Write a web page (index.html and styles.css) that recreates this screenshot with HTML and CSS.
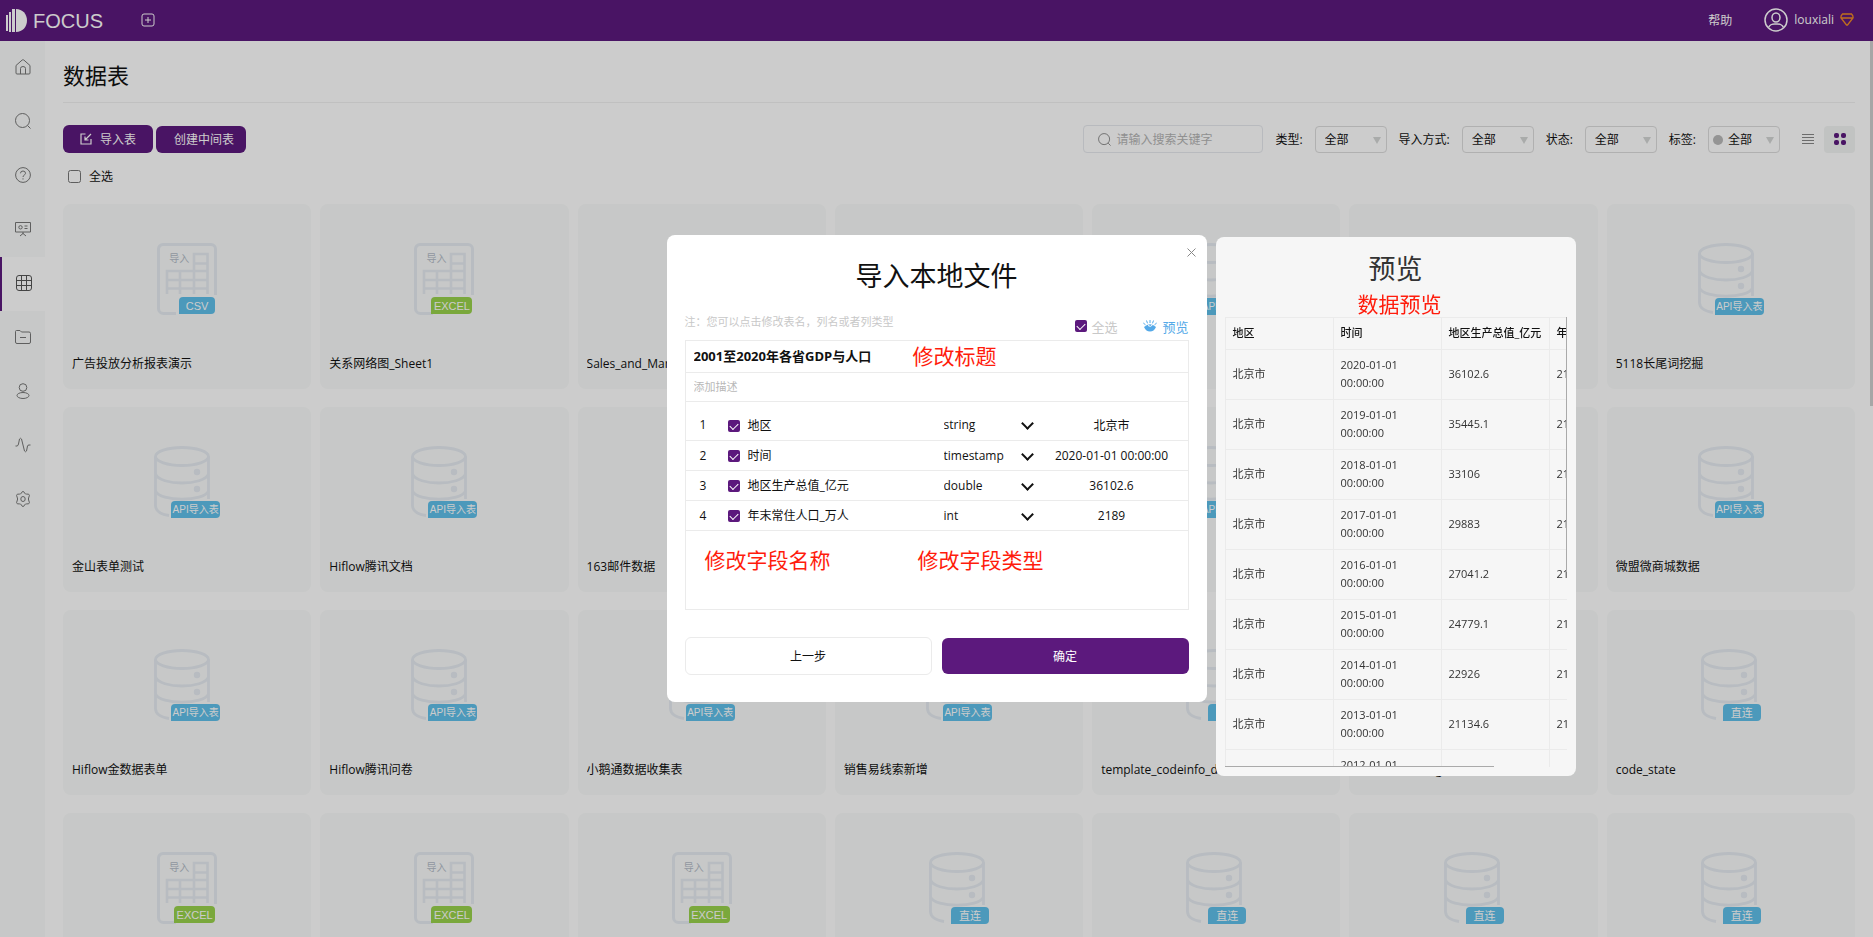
FILE: index.html
```html
<!DOCTYPE html>
<html lang="zh-CN">
<head>
<meta charset="utf-8">
<title>数据表</title>
<link rel="stylesheet" href="styles.css">
</head>
<body>
<svg class="defs" aria-hidden="true">
  <symbol id="file" viewBox="0 0 60 72">
    <path d="M58.5 52V6A4.5 4.5 0 0 0 54 1.5H6A4.5 4.5 0 0 0 1.500 6V65.500A5 5 0 0 0 6.500 70.500H19" fill="none" stroke="#e6ebf2" stroke-width="3"/>
    <path d="M10 51V28H50.500M23 28V51M37 51V11H50.500V51M37 20.500H50.500M10 37H50.500M10 45.500H50.500" fill="none" stroke="#e6ebf2" stroke-width="2.600"/>
  </symbol>
  <symbol id="db" viewBox="0 0 56 72">
    <g fill="none" stroke="#e6ebf2" stroke-width="2.800">
      <ellipse cx="28" cy="10.500" rx="26.500" ry="9"/>
      <path d="M1.500 10.500V60C2 66 8 68.500 15 69.500M54.500 10.500V53M1.500 28C6 40 50 40 54.500 28M1.500 45C6 56 50 56 54.500 45"/>
    </g>
    <circle cx="43" cy="26" r="3.200" fill="#e6ebf2"/><circle cx="43" cy="43" r="3.200" fill="#e6ebf2"/>
  </symbol>
</svg>

<div class="app">
  <header class="topbar">
    <a class="logo" href="#">
      <svg width="21" height="24" viewBox="0 0 21 24" fill="#fff"><rect x="0" y="6" width="2" height="16"/><rect x="3" y="3" width="2" height="20"/><rect x="6" y="0" width="3" height="23"/><path d="M10 0V23C16.500 23 21 18 21 11.500S16.500 0 10 0z"/></svg>
      <span>FOCUS</span>
    </a>
    <button class="icon-btn new-tab" aria-label="新建"><svg width="14" height="14" viewBox="0 0 14 14" fill="none" stroke="#fff"><rect x="1" y="1" width="12" height="12" rx="2"/><path d="M7 4V10M4 7H10"/></svg></button>
    <div class="account">
      <a href="#">帮助</a>
      <a class="user" href="#">
        <svg width="24" height="24" viewBox="0 0 24 24" fill="none" stroke="#fff" stroke-width="1.500"><circle cx="12" cy="12" r="11"/><ellipse cx="12" cy="9.500" rx="4" ry="4.500"/><path d="M4.500 19.500C6.500 15.500 9 16 12 16S17.500 15.500 19.500 19.500"/></svg>
        <span>louxiali</span>
        <svg width="14" height="13" viewBox="0 0 14 13" fill="none" stroke="#f08a24" stroke-width="1.300"><path d="M2.500 1H11.500Q13.500 3 13 5L7.500 12H6.500L1 5Q.5 3 2.500 1zM1 5H13"/></svg>
      </a>
    </div>
  </header>

  <div class="body">
    <nav class="side">
      <a href="#" aria-label="首页"><svg viewBox="0 0 16 16"><path d="M1 6.500L7.200 1Q8 .5 8.800 1L15 6.500V14Q15 15 14 15H2Q1 15 1 14zM5.500 15V9.500Q5.500 7.500 8 7.500T10.500 9.500V15"/></svg></a>
      <a href="#" aria-label="搜索"><svg viewBox="0 0 16 16"><circle cx="7.500" cy="7.500" r="7"/><path d="M12.500 12.500L15.500 15.500"/></svg></a>
      <a href="#" aria-label="帮助"><svg viewBox="0 0 16 16"><circle cx="8" cy="8" r="7.400"/><path d="M5.500 6.300Q5.500 4 8 4T10.500 6.300C10.500 8 8 8 8 10M8 11.300V12.500"/></svg></a>
      <a href="#" aria-label="看板"><svg viewBox="0 0 16 16"><path d="M.5 1.500H15.500V11H.5zM8 11V13M5 15L8 12.500L11 15M9.500 5H12.500M9.500 7.500H12.500"/><circle cx="5.500" cy="6.300" r="1.700"/></svg></a>
      <a href="#" class="current" aria-label="数据表"><svg viewBox="0 0 16 16"><rect x=".5" y=".5" width="15" height="15" rx="2.500"/><path d="M5.500 .5V15.500M10.500 .5V15.500M.5 5.500H15.500M.5 10.500H15.500"/></svg></a>
      <a href="#" aria-label="资源"><svg viewBox="0 0 16 16"><path d="M.5 2.500Q.5 1.500 1.500 1.500H5L6.500 3H14Q15.500 3 15.500 4.500V13Q15.500 14.500 14 14.500H2Q.5 14.500 .5 13zM5 8.500H11"/></svg></a>
      <a href="#" aria-label="用户"><svg viewBox="0 0 16 16"><circle cx="8" cy="4.500" r="3.800"/><ellipse cx="8" cy="12.500" rx="6" ry="3"/></svg></a>
      <a href="#" aria-label="监控"><svg viewBox="0 0 16 16"><path d="M.5 9H2Q3 9 3.500 7L4.500 2Q5.500 .5 6.500 2L9.500 14Q10.500 15.500 11.500 14L12.500 9Q12.700 8 14 8H15.500"/></svg></a>
      <a href="#" aria-label="设置"><svg viewBox="0 0 16 16"><path d="M6.300 2.200Q8 -1.400 9.700 2.200Q10.300 3.300 11.600 3.100Q15.600 2.800 13.900 6Q12.900 8 13.900 10Q15.600 13.200 11.600 12.900Q10.300 12.700 9.700 13.800Q8 17.400 6.300 13.800Q5.700 12.700 4.400 12.900Q.4 13.200 2.100 10Q3.100 8 2.100 6Q.4 2.800 4.400 3.100Q5.700 3.300 6.300 2.200z"/><ellipse cx="8" cy="8" rx="2.200" ry="2.500"/></svg></a>
    </nav>

    <main class="main">
      <h1 class="page-title">数据表</h1>
      <div class="toolbar">
        <button class="btn"><svg width="12" height="12" viewBox="0 0 12 12" fill="none" stroke="#fff" stroke-width="1.200"><path d="M5.500 1H1V11H11V6M11 1L5 7M5 3.500V7H8.500"/></svg>导入表</button>
        <button class="btn plain">创建中间表</button>
        <div class="filters">
          <label class="search"><svg width="13" height="13" viewBox="0 0 16 16" fill="none" stroke="#777"><circle cx="7.500" cy="7.500" r="6.800"/><path d="M12.500 12.500L15.500 15.500"/></svg><input type="text" placeholder="请输入搜索关键字" aria-label="搜索"></label>
          <label for="f1">类型:</label><span class="pick"><select id="f1"><option>全部</option></select></span>
          <label for="f2">导入方式:</label><span class="pick"><select id="f2"><option>全部</option></select></span>
          <label for="f3">状态:</label><span class="pick"><select id="f3"><option>全部</option></select></span>
          <label for="f4">标签:</label><span class="pick tag"><select id="f4"><option>全部</option></select></span>
          <div class="views">
            <button class="icon-btn" aria-label="列表"><svg width="12" height="12" viewBox="0 0 12 12" stroke="#888"><path d="M0 1.500H12M0 4.500H12M0 7.500H12M0 10.500H12"/></svg></button>
            <button class="icon-btn on" aria-label="网格"><svg width="12" height="12" viewBox="0 0 12 12" fill="#5c197d"><rect width="5" height="5" rx="2"/><rect x="7" width="5" height="5" rx="2"/><rect y="7" width="5" height="5" rx="2"/><rect x="7" y="7" width="5" height="5" rx="2"/></svg></button>
          </div>
        </div>
      </div>
      <label class="select-all"><input type="checkbox">全选</label>

      <div class="cards">
        <article class="card"><div class="pic file"><svg><use href="#file"/></svg><b>导入</b><i>CSV</i></div><p>广告投放分析报表演示</p></article>
        <article class="card"><div class="pic file excel"><svg><use href="#file"/></svg><b>导入</b><i>EXCEL</i></div><p>关系网络图_Sheet1</p></article>
        <article class="card"><div class="pic api"><svg><use href="#db"/></svg><i>API导入表</i></div><p>Sales_and_Marketing</p></article>
        <article class="card"><div class="pic api"><svg><use href="#db"/></svg><i>API导入表</i></div></article>
        <article class="card"><div class="pic api"><svg><use href="#db"/></svg><i>API导入表</i></div></article>
        <article class="card"><div class="pic api"><svg><use href="#db"/></svg><i>API导入表</i></div></article>
        <article class="card"><div class="pic api"><svg><use href="#db"/></svg><i>API导入表</i></div><p>5118长尾词挖掘</p></article>

        <article class="card"><div class="pic api"><svg><use href="#db"/></svg><i>API导入表</i></div><p>金山表单测试</p></article>
        <article class="card"><div class="pic api"><svg><use href="#db"/></svg><i>API导入表</i></div><p>Hiflow腾讯文档</p></article>
        <article class="card"><div class="pic api"><svg><use href="#db"/></svg><i>API导入表</i></div><p>163邮件数据</p></article>
        <article class="card"><div class="pic api"><svg><use href="#db"/></svg><i>API导入表</i></div></article>
        <article class="card"><div class="pic api"><svg><use href="#db"/></svg><i>API导入表</i></div></article>
        <article class="card"><div class="pic api"><svg><use href="#db"/></svg><i>API导入表</i></div></article>
        <article class="card"><div class="pic api"><svg><use href="#db"/></svg><i>API导入表</i></div><p>微盟微商城数据</p></article>

        <article class="card"><div class="pic api"><svg><use href="#db"/></svg><i>API导入表</i></div><p>Hiflow金数据表单</p></article>
        <article class="card"><div class="pic api"><svg><use href="#db"/></svg><i>API导入表</i></div><p>Hiflow腾讯问卷</p></article>
        <article class="card"><div class="pic api"><svg><use href="#db"/></svg><i>API导入表</i></div><p>小鹅通数据收集表</p></article>
        <article class="card"><div class="pic api"><svg><use href="#db"/></svg><i>API导入表</i></div><p>销售易线索新增</p></article>
        <article class="card"><div class="pic direct"><svg><use href="#db"/></svg><i>直连</i></div><p>template_codeinfo_d</p></article>
        <article class="card"><div class="pic direct"><svg><use href="#db"/></svg><i>直连</i></div><p>code_sales_region</p></article>
        <article class="card"><div class="pic direct"><svg><use href="#db"/></svg><i>直连</i></div><p>code_state</p></article>

        <article class="card"><div class="pic file excel"><svg><use href="#file"/></svg><b>导入</b><i>EXCEL</i></div></article>
        <article class="card"><div class="pic file excel"><svg><use href="#file"/></svg><b>导入</b><i>EXCEL</i></div></article>
        <article class="card"><div class="pic file excel"><svg><use href="#file"/></svg><b>导入</b><i>EXCEL</i></div></article>
        <article class="card"><div class="pic direct"><svg><use href="#db"/></svg><i>直连</i></div></article>
        <article class="card"><div class="pic direct"><svg><use href="#db"/></svg><i>直连</i></div></article>
        <article class="card"><div class="pic direct"><svg><use href="#db"/></svg><i>直连</i></div></article>
        <article class="card"><div class="pic direct"><svg><use href="#db"/></svg><i>直连</i></div></article>
      </div>
      <div class="page-scroll"></div>
    </main>
  </div>
</div>

<div class="overlay">
  <div class="stage">
    <section class="modal" role="dialog" aria-labelledby="dlg">
      <button class="icon-btn close" aria-label="关闭"><svg width="9" height="9" viewBox="0 0 9 9" stroke="#888"><path d="M.5 .5L8.500 8.500M8.500 .5L.5 8.500"/></svg></button>
      <h2 class="dlg-title" id="dlg">导入本地文件</h2>
      <div class="hint">
        <span class="note">注：您可以点击修改表名，列名或者列类型</span>
        <label class="all"><input class="check" type="checkbox" checked>全选</label>
        <button class="preview-link"><svg width="14" height="12" viewBox="0 0 14 12" fill="#54a9e8"><path d="M1 7Q7 1.500 13 7Q11 11.500 7 11.500T1 7z"/><path d="M7 0V3M3.500 .5L4.500 3.300M10.500 .5L9.500 3.300M.3 3L2.500 4.800M13.700 3L11.500 4.800" stroke="#54a9e8"/><path d="M5 5.500Q7.500 7.500 9.500 5" stroke="#fff" fill="none"/></svg>预览</button>
      </div>
      <div class="sheet">
        <input class="sheet-name" type="text" value="2001至2020年各省GDP与人口" aria-label="表名">
        <input class="sheet-desc" type="text" placeholder="添加描述" aria-label="描述">
        <table class="fields">
          <tr><td class="no">1</td><td class="tick"><input class="check" type="checkbox" checked aria-label="地区"></td><td>地区</td><td class="type"><select aria-label="类型"><option>string</option></select></td><td class="val">北京市</td></tr>
          <tr><td class="no">2</td><td class="tick"><input class="check" type="checkbox" checked aria-label="时间"></td><td>时间</td><td class="type"><select aria-label="类型"><option>timestamp</option></select></td><td class="val">2020-01-01 00:00:00</td></tr>
          <tr><td class="no">3</td><td class="tick"><input class="check" type="checkbox" checked aria-label="地区生产总值"></td><td>地区生产总值_亿元</td><td class="type"><select aria-label="类型"><option>double</option></select></td><td class="val">36102.6</td></tr>
          <tr><td class="no">4</td><td class="tick"><input class="check" type="checkbox" checked aria-label="年末常住人口"></td><td>年末常住人口_万人</td><td class="type"><select aria-label="类型"><option>int</option></select></td><td class="val">2189</td></tr>
        </table>
      </div>
      <div class="actions"><button class="back">上一步</button><button class="ok">确定</button></div>
      <span class="mark mark-title">修改标题</span>
      <span class="mark mark-name">修改字段名称</span>
      <span class="mark mark-type">修改字段类型</span>
    </section>

    <aside class="preview">
      <h2>预览</h2>
      <span class="mark mark-data">数据预览</span>
      <div class="grid-view">
        <table>
          <tr><th>地区</th><th>时间</th><th>地区生产总值_亿元</th><th>年末</th></tr>
          <tr><td>北京市</td><td>2020-01-01 00:00:00</td><td>36102.6</td><td>2189</td></tr>
          <tr><td>北京市</td><td>2019-01-01 00:00:00</td><td>35445.1</td><td>2190</td></tr>
          <tr><td>北京市</td><td>2018-01-01 00:00:00</td><td>33106</td><td>2192</td></tr>
          <tr><td>北京市</td><td>2017-01-01 00:00:00</td><td>29883</td><td>2194</td></tr>
          <tr><td>北京市</td><td>2016-01-01 00:00:00</td><td>27041.2</td><td>2195</td></tr>
          <tr><td>北京市</td><td>2015-01-01 00:00:00</td><td>24779.1</td><td>2188</td></tr>
          <tr><td>北京市</td><td>2014-01-01 00:00:00</td><td>22926</td><td>2171</td></tr>
          <tr><td>北京市</td><td>2013-01-01 00:00:00</td><td>21134.6</td><td>2125</td></tr>
          <tr><td></td><td>2012-01-01 00:00:00</td><td></td><td></td></tr>
        </table>
        <div class="bar-v"></div><div class="bar-h"></div>
      </div>
    </aside>
  </div>
</div>
</body>
</html>
```
FILE: styles.css
```css
* { box-sizing: border-box; }
body, h1, h2, p { margin: 0; }
body, button, input, select {
  font-family: "Open Sans", "Noto Sans CJK SC", sans-serif;
  font-size: 12px;
  color: #111;
}
a { color: inherit; text-decoration: none; }
svg { flex: none; }
button { cursor: pointer; }
.defs { position: absolute; width: 0; height: 0; }
.icon-btn { border: 0; background: none; padding: 0; display: flex; align-items: center; justify-content: center; }

.app { height: 100vh; display: flex; flex-direction: column; overflow: hidden; background: #fff; }
.topbar { height: 41px; flex: none; display: flex; align-items: center; padding: 0 19px 2px 6px; background: #5c197d; color: #fff; }
.logo { display: flex; align-items: center; gap: 6px; padding-top: 2px; font: 20px/24px "Liberation Sans", sans-serif; }
.new-tab { margin-left: 38px; }
.account { margin-left: auto; display: flex; align-items: center; gap: 32px; }
.user { display: flex; align-items: center; gap: 6px; }

.body { flex: 1; display: flex; min-height: 0; }
.side { width: 45px; flex: none; background: #f9fbfa; }
.side a { display: flex; align-items: center; justify-content: center; height: 54px; padding-bottom: 2px; }
.side svg { width: 16px; height: 16px; fill: none; stroke: #777; overflow: visible; }
.side .current { background: #fff; border-left: 2px solid #5c197d; }
.side .current svg { stroke: #555; }

.main { flex: 1; position: relative; min-width: 0; padding: 0 18px; overflow: hidden; }
.page-title { height: 62px; padding-top: 8px; line-height: 52px; font-size: 22px; font-weight: 400; border-bottom: 1px solid #f0f0f0; }
.toolbar { display: flex; align-items: center; gap: 3px; height: 28px; margin-top: 22px; }
.btn { width: 90px; height: 28px; border: 0; border-radius: 6px; background: #5c197d; color: #fff; display: flex; align-items: center; justify-content: center; gap: 8px; padding: 0; white-space: nowrap; }
.btn.plain { height: 27px; padding-left: 6px; }
.filters { margin-left: auto; display: flex; align-items: center; gap: 12px; }
.search { display: flex; align-items: center; gap: 5px; width: 180px; height: 28px; padding: 0 14px; border: 1px solid #e6e9ee; border-radius: 4px; }
.search input { border: 0; outline: 0; padding: 0; width: 100%; background: none; }
.search input::placeholder { color: #b4b4b4; opacity: 1; }
.pick { position: relative; width: 72px; height: 27px; }
.pick select { appearance: none; width: 100%; height: 100%; padding: 1px 0 0 9px; border: 1px solid #dcdcdc; border-radius: 4px; background: #fff; }
.pick::after { content: ""; position: absolute; right: 6px; top: 11px; border: 4px solid transparent; border-top: 7px solid #d4d6d5; border-bottom: 0; }
.pick.tag select { padding-left: 19px; }
.tag::before { content: ""; position: absolute; left: 5px; top: 9px; width: 10px; height: 10px; border-radius: 50%; background: #b9b9b9; }
.views { display: flex; gap: 1px; }
.views .icon-btn { width: 31px; height: 27px; border-radius: 4px; }
.views .on { background: #f2f4f3; }
.select-all { display: flex; align-items: center; gap: 8px; height: 46px; margin-bottom: 5px; padding-left: 5px; }
.select-all input { width: 13px; height: 13px; margin: 0; }

.cards { display: grid; grid-template-columns: repeat(7, 1fr); gap: 18px 9px; }
.card { height: 185px; border-radius: 8px; background: #f9fbfa; padding-top: 39px; }
.card p { margin: 40px 9px 0; line-height: 18px; white-space: nowrap; overflow: hidden; text-overflow: ellipsis; }
.pic { position: relative; width: 60px; height: 72px; margin: 0 auto; }
.pic svg { display: block; width: 60px; height: 72px; }
.pic b { position: absolute; left: 12px; top: 8px; font-size: 10px; line-height: 14px; font-weight: 400; color: #b4bcc8; }
.pic i { position: absolute; right: 2px; bottom: 1px; width: 36px; height: 17px; text-align: center; border-radius: 4px 4px 4px 0; background: #5fc0ea; color: #fff; font: 11px/18px "Liberation Sans", "Noto Sans CJK SC", sans-serif; white-space: nowrap; }
.pic.excel i { width: 41px; background: #99d24c; }
.pic.api { width: 66px; }
.api svg, .direct svg { width: 56px; }
.pic.api i { right: 0; bottom: 0; width: 49px; font-size: 10px; }
.pic.direct i { right: 0; bottom: 0; width: 38px; }
.page-scroll { position: absolute; right: 0; top: 0; width: 3px; height: 365px; background: #d0d0d0; }

.overlay { position: fixed; inset: 0; background: rgba(0, 0, 0, .2); display: flex; align-items: center; justify-content: center; }
.stage { position: relative; width: 540px; }
.modal { position: relative; background: #fff; border-radius: 8px; padding: 21px 18px 27px; }
.close { position: absolute; right: 11px; top: 13px; }
.dlg-title { font-size: 27px; line-height: 40px; font-weight: 400; text-align: center; }
.hint { display: flex; align-items: center; height: 26px; margin-top: 18px; padding-bottom: 2px; color: #c8c8c8; }
.note { font-size: 11px; line-height: 16px; margin-right: auto; align-self: flex-start; }
.all { display: flex; align-items: center; gap: 4px; font-size: 13px; }
.preview-link { display: flex; align-items: center; gap: 5px; border: 0; background: none; padding: 0; margin-left: 26px; color: #54a9e8; font-size: 13px; }
.check { appearance: none; width: 12px; height: 12px; margin: 0; border-radius: 2px; background: #5c197d; display: inline-grid; place-items: center; }
.check:checked::before { content: ""; width: 7px; height: 4px; border: solid #fff; border-width: 0 0 1px 1px; rotate: -45deg; margin-bottom: 2px; }
.sheet { height: 270px; border: 1px solid #ebebeb; }
.sheet input[type=text] { display: block; width: 100%; border: 0; outline: 0; border-bottom: 1px solid #ebebeb; background: none; padding: 0 8px 2px; }
.sheet input.sheet-name { height: 32px; font-size: 13px; font-weight: 700; }
.sheet input.sheet-desc { height: 29px; font-size: 11px; }
.sheet-desc::placeholder { color: #b8b8b8; opacity: 1; }
.fields { width: 100%; margin-top: 8px; border-collapse: collapse; table-layout: fixed; }
.fields td { height: 30px; padding: 0; border-bottom: 1px solid #ebebeb; }
.fields .no { width: 42px; padding-left: 14px; }
.fields .tick { width: 20px; line-height: 12px; padding-top: 2px; }
.fields .tick .check { vertical-align: middle; }
.fields .type { width: 92px; position: relative; }
.fields .type select { appearance: none; border: 0; padding: 0; width: 100%; background: none; }
.fields .type::after { content: ""; position: absolute; right: 4px; top: 9px; width: 7px; height: 7px; border: solid #111; border-width: 0 2px 2px 0; rotate: 45deg; }
.fields .val { width: 152px; text-align: center; }
.actions { display: grid; grid-template-columns: 1fr 1fr; align-items: center; gap: 10px; margin-top: 27px; }
.actions button { height: 38px; border-radius: 6px; border: 1px solid #ebebeb; background: #fff; }
.actions .ok { height: 36px; border: 0; background: #5c197d; color: #fff; }

.mark { position: absolute; font-size: 21px; line-height: 28px; color: #ff1c0c; white-space: nowrap; }
.mark-title { left: 246px; top: 107px; }
.mark-name { left: 38px; top: 311px; }
.mark-type { left: 251px; top: 311px; }
.mark-data { left: 142px; top: 53px; }

.preview { position: absolute; left: calc(100% + 9px); top: 2px; width: 360px; padding: 12px 9px 9px; border-radius: 8px; background: #f6f6f6; }
.preview h2 { font-size: 27px; line-height: 40px; font-weight: 400; text-align: center; color: #333; }
.grid-view { position: relative; height: 450px; margin-top: 28px; overflow: hidden; }
.grid-view table { width: 433px; border-collapse: collapse; table-layout: fixed; }
.grid-view th, .grid-view td { padding: 0 7px 1px; border: 1px solid #ebebeb; font-size: 11px; line-height: 18px; text-align: left; color: #333; }
.grid-view th { height: 32px; font-weight: 500; white-space: nowrap; color: #111; }
.grid-view td { height: 50px; }
.bar-v { position: absolute; right: 0; top: 0; width: 1px; height: 255px; background: #aaa; }
.bar-h { position: absolute; left: 0; bottom: 0; width: 269px; height: 1px; background: #aaa; }
```
